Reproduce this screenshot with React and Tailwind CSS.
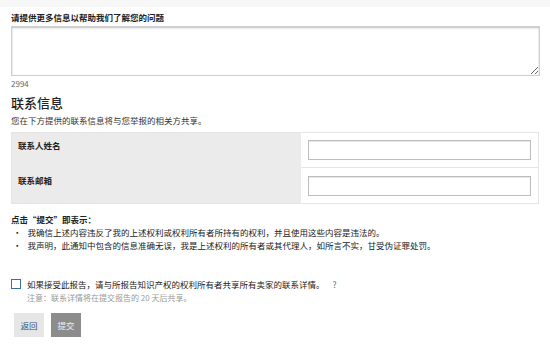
const font = { fontFamily: '"Noto Sans CJK SC", "Noto Sans", sans-serif' };

export default function App() {
    return (
        <div className="w-[550px] h-[347px] bg-white text-[#333] overflow-hidden" style={font}>
            <div className="h-[7px] bg-[#f7f7f7]" />
            <div className="px-[11px]">
                <label className="block mt-[4px] text-[8.5px] leading-[12px] font-bold text-[#222]">
                    请提供更多信息以帮助我们了解您的问题
                </label>
                <textarea className="block mt-[3px] w-[529px] h-[50px] border border-[#cfcfcf] shadow-[inset_0_1px_2px_rgba(0,0,0,0.25)] resize-y" />
                <p className="mt-[2px] text-[8px] leading-[12px] text-[#666]">2994</p>

                <h2 className="mt-[5px] text-[13px] leading-[16px] font-medium text-[#222]">联系信息</h2>
                <p className="mt-[3px] text-[8.5px] leading-[12px] text-[#333]">您在下方提供的联系信息将与您举报的相关方共享。</p>

                <div className="mt-[6px] w-[528px] border border-[#e6e6e6] flex">
                    <div className="w-[289px] bg-[#ebebeb] flex flex-col">
                        <div className="h-[35px] pl-[6px] pt-[6px] text-[8.5px] leading-[12px] font-bold text-[#222]">联系人姓名</div>
                        <div className="h-[35px] pl-[6px] pt-[6px] text-[8.5px] leading-[12px] font-bold text-[#222]">联系邮箱</div>
                    </div>
                    <div className="flex-1 flex flex-col bg-white">
                        <div className="h-[35px] flex items-center px-[7px] border-b border-[#e6e6e6]">
                            <input className="w-full h-[20px] border border-[#bdbdbd] shadow-[inset_0_1px_1px_rgba(0,0,0,0.1)]" />
                        </div>
                        <div className="h-[35px] flex items-center px-[7px]">
                            <input className="w-full h-[20px] border border-[#bdbdbd] shadow-[inset_0_1px_1px_rgba(0,0,0,0.1)]" />
                        </div>
                    </div>
                </div>

                <p className="mt-[9px] text-[8.5px] leading-[12px] font-bold text-[#222]">点击“提交”即表示：</p>
                <ul className="mt-[1px] text-[8.5px] leading-[13px] text-[#222]">
                    <li className="flex gap-[6px] pl-[2px]"><span>•</span><span>我确信上述内容违反了我的上述权利或权利所有者所持有的权利，并且使用这些内容是违法的。</span></li>
                    <li className="flex gap-[6px] pl-[2px]"><span>•</span><span>我声明，此通知中包含的信息准确无误，我是上述权利的所有者或其代理人，如所言不实，甘受伪证罪处罚。</span></li>
                </ul>

                <div className="mt-[26px] flex items-start gap-[6px]">
                    <span className="mt-[1px] w-[10px] h-[10px] border border-[#3a6fa0] bg-white shrink-0" />
                    <div>
                        <p className="text-[8.5px] leading-[12px] text-[#222]">
                            如果接受此报告，请与所报告知识产权的权利所有者共享所有卖家的联系详情。
                            <span className="ml-[8px] text-[#4a78a8]">?</span>
                        </p>
                        <p className="mt-[2px] text-[8px] leading-[11px] text-[#999]">注意：联系详情将在提交报告的 20 天后共享。</p>
                    </div>
                </div>

                <div className="mt-[10px] flex gap-[7px] pl-[3px]">
                    <button className="w-[30px] h-[24px] bg-[#e6e6e6] text-[8.5px] text-[#2d4f78]">返回</button>
                    <button className="w-[30px] h-[24px] bg-[#8c8c8c] text-[8.5px] text-[#eeeeee]">提交</button>
                </div>
            </div>
        </div>
    );
}
